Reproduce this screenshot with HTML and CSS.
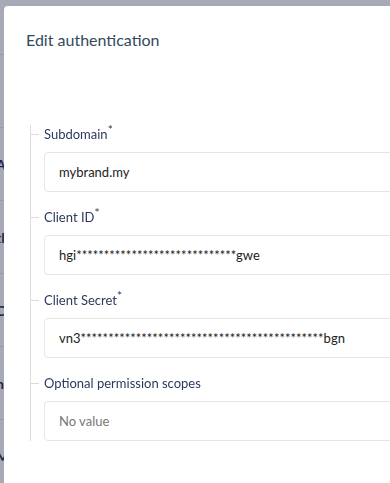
FILE: index.html
```html
<!DOCTYPE html>
<html lang="en">
<head>
    <meta charset="UTF-8">
    <meta name="viewport" content="width=device-width, initial-scale=1.0">
    <title>Edit authentication</title>

    <link rel="stylesheet" href="styles.css">
</head>
<body>
    <!-- page behind the overlay -->
    <div class="page">
        <div class="page-head"></div>
        <div class="row"><span class="cell">l</span></div>
        <div class="row"><span class="cell">A</span></div>
        <div class="row"><span class="cell">tl</span></div>
        <div class="row"><span class="cell">C</span></div>
        <div class="row"><span class="cell">n</span></div>
        <div class="row"><span class="cell">M</span></div>
    </div>

    <div class="overlay">
        <div class="modal">
            <h2 class="modal-title">Edit authentication</h2>

            <div class="fields">
                <div class="field">
                    <label class="label">Subdomain<sup>*</sup></label>
                    <div class="input">mybrand.my</div>
                </div>
                <div class="field">
                    <label class="label">Client ID<sup>*</sup></label>
                    <div class="input">hgi*****************************gwe</div>
                </div>
                <div class="field">
                    <label class="label">Client Secret<sup>*</sup></label>
                    <div class="input">vn3********************************************bgn</div>
                </div>
                <div class="field">
                    <label class="label">Optional permission scopes</label>
                    <div class="input empty">No value</div>
                </div>
            </div>
        </div>
    </div>
</body>
</html>
```

FILE: styles.css
```css
*{
    box-sizing: border-box;
}

body{
    margin: 0;
    overflow: hidden;
    font-family: Lato, "Liberation Sans", sans-serif;
    background-color: #fff;
}

/* the list behind the overlay, only a sliver shows at the left */
.page{
    width: 390px;
}
.page-head{
    height: 55px;
    border-bottom: 1px solid #e4e4ea;
}
.row{
    height: 73px;
    display: flex;
    align-items: center;
    border-bottom: 1px solid #e4e4ea;
}
.cell{
    margin-left: -4px;
    font-size: 14px;
    font-weight: 700;
    color: #1b1f4a;
}

.overlay{
    position: fixed;
    top: 0;
    left: 0;
    right: 0;
    bottom: 0;
    background-color: rgba(38, 40, 76, 0.4);
}

.modal{
    position: absolute;
    top: 6px;
    left: 4px;
    width: 600px;
    height: 600px;
    padding: 22px 0 0 22px;
    background-color: #fff;
    border-radius: 4px;
}

.modal-title{
    margin: 0 0 73px;
    font-size: 16px;
    line-height: 24px;
    font-weight: 400;
    color: #34495e;
}

/* the grey guide line with the little ticks */
.fields{
    display: flex;
    flex-direction: column;
    gap: 16px;
    margin-left: 4px;
    padding-left: 13px;
    border-left: 1px solid #dcdcdc;
}

.field{
    display: flex;
    flex-direction: column;
    gap: 9px;
}

.label{
    position: relative;
    height: 18px;
    line-height: 18px;
    font-size: 13px;
    color: #2c3a5c;
}
.label::before{
    content: '';
    position: absolute;
    left: -13px;
    top: 9px;
    width: 8px;
    border-top: 1px solid #dcdcdc;
}
.label sup{
    font-size: 12px;
    line-height: 0;
}

.input{
    height: 40px;
    display: flex;
    align-items: center;
    padding-left: 14px;
    border: 1px solid #e6e6e6;
    border-radius: 4px;
    font-size: 13px;
    color: #222;
    white-space: nowrap;
}
.input.empty{
    color: #777;
}
```
